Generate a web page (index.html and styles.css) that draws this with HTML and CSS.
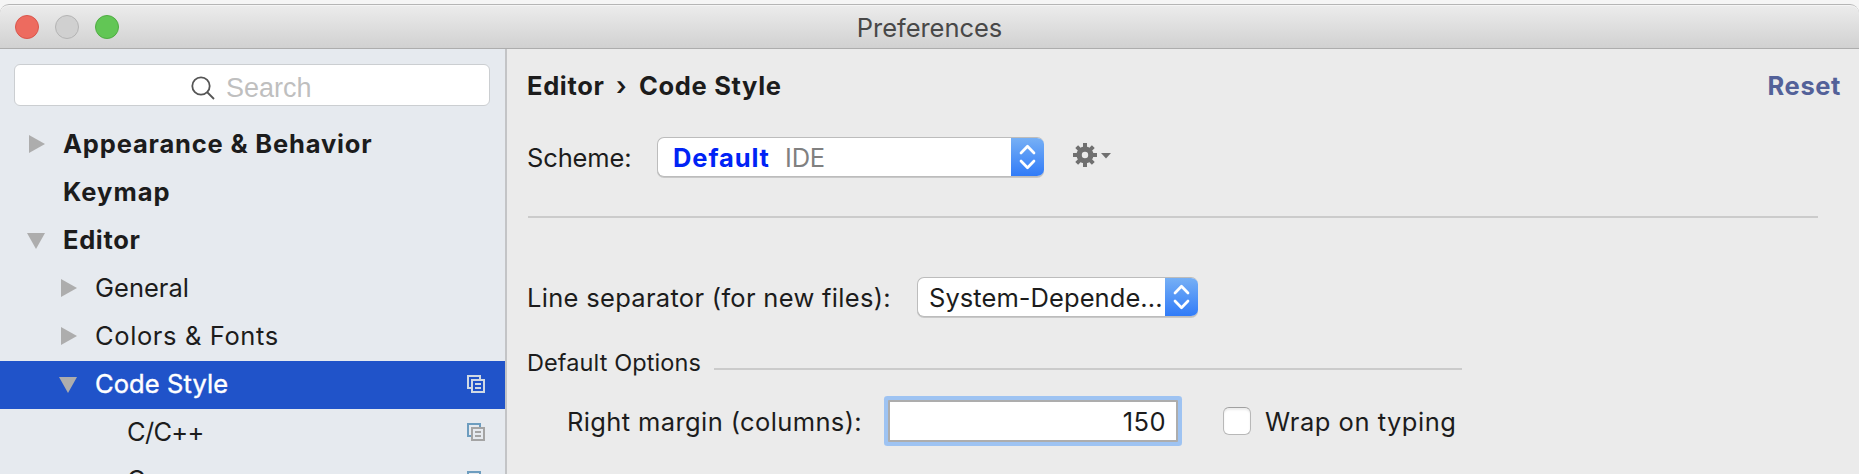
FILE: index.html
```html
<!DOCTYPE html>
<html lang="en">
<head>
<meta charset="utf-8">
<title>Preferences</title>
<link rel="stylesheet" href="styles.css">
</head>
<body>
<svg class="defs" width="0" height="0">
  <defs>
    <symbol id="arrow-right" viewBox="0 0 16 18"><path d="M0 0L16 9L0 18Z" fill="#adadad"/></symbol>
    <symbol id="arrow-down" viewBox="0 0 18 16"><path d="M0 0H18L9 16Z" fill="#adadad"/></symbol>
    <symbol id="copy" viewBox="0 0 18 18">
      <path class="copy-back" d="M0 0H14V4H12V2H2V12H4V14H0Z"/>
      <path class="copy-front" fill-rule="evenodd" d="M4 4H18V18H4ZM6 6V16H16V6ZM8 8H14V10H8ZM8 12H14V14H8Z"/>
    </symbol>
    <symbol id="stepper" viewBox="0 0 33 40">
      <path d="M10 16L16.5 9.3L23 16M10 24L16.5 30.7L23 24" fill="none" stroke="#fff" stroke-width="2.7" stroke-linecap="round" stroke-linejoin="round"/>
    </symbol>
  </defs>
</svg>
<div class="window">
  <header class="titlebar">
    <div class="lights"><span class="light close"></span><span class="light minimize"></span><span class="light zoom"></span></div>
    <h1 class="title">Preferences</h1>
  </header>
  <div class="content">
    <aside class="sidebar">
      <div class="search">
        <svg class="search-icon" width="24" height="24" viewBox="0 0 24 24"><circle cx="10" cy="10" r="8.7"/><path d="M16 16L23 23"/></svg>
        <span class="search-label">Search</span>
      </div>
      <ul class="tree">
        <li class="row top"><svg class="arrow collapsed" width="18" height="18"><use href="#arrow-right" x="2" width="16" height="18"/></svg><span class="t-appearance">Appearance &amp; Behavior</span></li>
        <li class="row top"><span class="arrow"></span><span class="t-keymap">Keymap</span></li>
        <li class="row top"><svg class="arrow" width="18" height="18"><use href="#arrow-down" y="1" width="18" height="16"/></svg><span class="t-editor">Editor</span></li>
        <li class="row child"><svg class="arrow collapsed" width="18" height="18"><use href="#arrow-right" x="2" width="16" height="18"/></svg><span class="t-general">General</span></li>
        <li class="row child"><svg class="arrow collapsed" width="18" height="18"><use href="#arrow-right" x="2" width="16" height="18"/></svg><span class="t-colors">Colors &amp; Fonts</span></li>
        <li class="row child selected"><svg class="arrow" width="18" height="18"><use href="#arrow-down" y="1" width="18" height="16"/></svg><span class="t-style">Code Style</span><svg class="copy" width="18" height="18"><use href="#copy"/></svg></li>
        <li class="row leaf"><span class="t-cpp">C/C++</span><svg class="copy" width="18" height="18"><use href="#copy"/></svg></li>
        <li class="row leaf"><span>C</span><svg class="copy" width="18" height="18"><use href="#copy"/></svg></li>
      </ul>
    </aside>
    <main class="main">
      <div class="heading">
        <div class="crumbs"><span class="crumb-editor">Editor</span><span class="crumb-sep">›</span><span class="crumb-style">Code Style</span></div>
        <a class="reset">Reset</a>
      </div>
      <div class="scheme">
        <span class="scheme-label">Scheme:</span>
        <div class="select scheme-select"><span class="scheme-name">Default</span><span class="scheme-scope">IDE</span><svg class="stepper" width="33" height="40"><use href="#stepper"/></svg></div>
        <svg class="gear" width="38" height="24" viewBox="0 0 38 24">
          <g fill="#707070">
            <path fill-rule="evenodd" d="M12 3.5A8.5 8.5 0 1 0 12 20.5A8.5 8.5 0 1 0 12 3.5ZM12 8.8A3.2 3.2 0 1 1 12 15.2A3.2 3.2 0 1 1 12 8.8Z"/>
            <path d="M10 0H14V5H10ZM10 19H14V24H10ZM0 10H5V14H0ZM19 10H24V14H19Z"/>
            <path d="M2.3 5.1L5.1 2.3L8.4 5.6L5.6 8.4ZM18.9 2.3L21.7 5.1L18.4 8.4L15.6 5.6ZM21.7 18.9L18.9 21.7L15.6 18.4L18.4 15.6ZM5.1 21.7L2.3 18.9L5.6 15.6L8.4 18.4Z"/>
            <path d="M28 10H38L33 15.5Z"/>
          </g>
        </svg>
      </div>
      <hr class="divider">
      <div class="separator-row">
        <span class="separator-label">Line separator (for new files):</span>
        <div class="select separator-select"><span class="separator-value">System-Depende...</span><svg class="stepper" width="33" height="40"><use href="#stepper"/></svg></div>
      </div>
      <div class="group"><span class="group-title">Default Options</span><span class="group-line"></span></div>
      <div class="margin-row">
        <span class="margin-label">Right margin (columns):</span>
        <div class="field">150</div>
        <span class="checkbox"></span>
        <span class="wrap-label">Wrap on typing</span>
      </div>
    </main>
  </div>
</div>
</body>
</html>
```
FILE: styles.css
```css
* { box-sizing: border-box; }
body {
  margin: 0;
  height: 474px;
  overflow: hidden;
  background: #f5f5f5;
  color: #1c1c1c;
  font: 25.5px/30px Inter, Roboto, sans-serif;
  white-space: nowrap;
}
.defs { display: block; }
.window { padding-top: 4px; }
.titlebar {
  display: grid;
  grid-template-columns: 1fr auto 1fr;
  align-items: center;
  height: 45px;
  border-top: 1px solid #b5b5b5;
  border-bottom: 1px solid #adadad;
  border-radius: 9px 9px 0 0;
  background: linear-gradient(#ececec, #d1d1d1);
  box-shadow: inset 0 1px #f5f5f5;
}
.lights { display: flex; gap: 16px; padding-left: 15px; }
.light { width: 24px; height: 24px; border: 1px solid; border-radius: 50%; }
.close { background: #ed6b5f; border-color: #d9564c; }
.minimize { background: #d0d0d0; border-color: #b4b4b4; }
.zoom { background: #62c655; border-color: #4fac42; }
.title { margin: 2px 0 0; font-size: 25.5px; font-weight: 400; color: #484848; letter-spacing: -.05px; }
.content { display: flex; height: 425px; overflow: hidden; }

.sidebar { flex: none; width: 507px; border-right: 2px solid #c3c4c6; background: #e6eaef; padding-top: 15px; }
.search {
  display: flex;
  align-items: center;
  height: 42px;
  margin: 0 15px 0 14px;
  padding-left: 176px;
  border: 1px solid #cbced1;
  border-radius: 6px;
  background: #fff;
}
.search-icon { margin-top: 5px; fill: none; stroke: #555; stroke-width: 1.8; }
.search-label { margin: 5px 0 0 11px; font-family: "Liberation Sans", sans-serif; font-size: 27px; color: #bfbfbf; }
.tree { list-style: none; margin: 15px 0 0; padding: 0; }
.row { display: flex; align-items: center; height: 48px; padding-right: 20px; }
.row > span { margin-top: -2px; }
.top { padding-left: 27px; font-weight: 700; }
.child { padding-left: 59px; }
.leaf { padding-left: 127px; }
.arrow { flex: none; width: 18px; margin-right: 18px; }
.collapsed { margin-top: -2px; }
.selected { background: #2053c9; color: #fff; -webkit-text-stroke: .4px #fff; }
.copy { margin-left: auto; margin-top: -2px; }
.copy-back { fill: var(--edge, #6d9dbf); }
.copy-front { fill: var(--edge, #a4a4a4); }
.selected .copy { --edge: #d0d9e4; }
.t-appearance { letter-spacing: .83px; }
.t-keymap { letter-spacing: 1px; }
.t-editor { letter-spacing: .65px; }
.t-colors { letter-spacing: .62px; }
.t-style { letter-spacing: .1px; }
.t-cpp { letter-spacing: -.7px; }

.main { flex: 1; background: #ebebeb; padding: 22px 18px 0 20px; }
.heading { display: flex; justify-content: space-between; height: 30px; font-weight: 700; }
.crumbs { display: flex; }
.crumb-editor { width: 89px; letter-spacing: .65px; }
.crumb-sep { width: 23px; font-weight: 600; }
.crumb-style { letter-spacing: .67px; }
.reset { color: #536199; letter-spacing: .6px; }
.scheme { display: flex; align-items: center; height: 40px; margin-top: 36px; }
.scheme-label { width: 130px; margin-top: 2px; letter-spacing: -.15px; }
.select {
  display: flex;
  align-items: center;
  height: 40px;
  overflow: hidden;
  border: solid #bcbcbc;
  border-width: 1px 0 1px 1px;
  border-radius: 7px;
  background: #fff;
  box-shadow: 0 1px #c8c8c8;
}
.select > span { margin-top: 2px; }
.stepper { flex: none; margin: -1px 0 -1px auto; background: linear-gradient(#78b1f5, #2f7af8); }
.scheme-select { width: 387px; padding-left: 15px; }
.scheme-name { width: 112px; font-weight: 700; color: #0023f5; letter-spacing: .9px; }
.scheme-scope { color: #808080; letter-spacing: -.2px; }
.gear { margin: -4px 0 0 29px; }
.divider { width: 1290px; height: 2px; margin: 39px 0 59px 1px; border: 0; background: #cbcbcb; }
.separator-row { display: flex; align-items: center; }
.separator-label { width: 390px; margin-top: 2px; letter-spacing: .3px; }
.separator-select { width: 281px; padding-left: 11px; }
.separator-value { width: 236px; letter-spacing: .06px; }
.group { display: flex; align-items: center; height: 30px; margin-top: 31px; }
.group-title { width: 187px; font-size: 23.5px; letter-spacing: .1px; }
.group-line { width: 748px; height: 2px; margin-top: 12px; background: #cbcbcb; }
.margin-row { display: flex; align-items: center; height: 42px; margin: 22px 0 0 40px; }
.margin-label { width: 321px; margin-top: 2px; letter-spacing: .38px; }
.field {
  width: 290px;
  height: 42px;
  padding: 5px 10px 0 0;
  border: 2px solid #adadad;
  background: #fff;
  box-shadow: 0 0 0 4px #9ec3f2;
  border-radius: 1px;
  text-align: right;
  letter-spacing: .4px;
}
.checkbox { width: 28px; height: 28px; margin: 0 14px 0 45px; border: 1px solid #b8b8b8; border-top-color: #a0a0a0; border-radius: 6px; background: #fff; box-shadow: inset 0 2px 2px #ececec; }
.wrap-label { margin-top: 2px; letter-spacing: .52px; }
```
